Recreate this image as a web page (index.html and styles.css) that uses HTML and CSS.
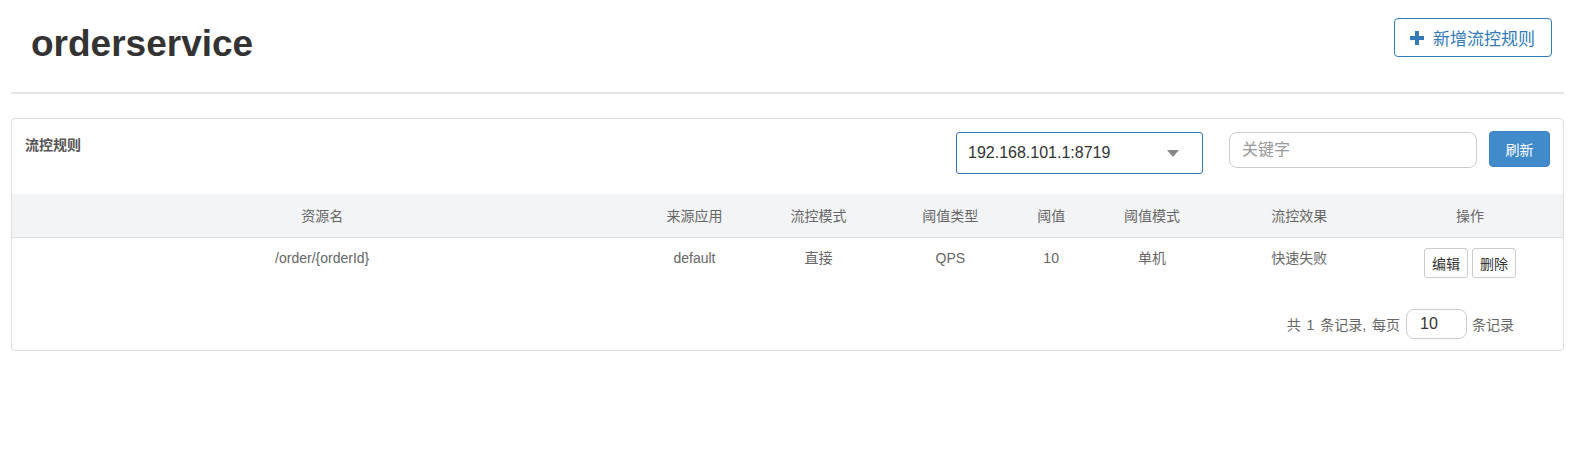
FILE: index.html
```html
<!DOCTYPE html>
<html lang="zh-CN">
<head>
<meta charset="utf-8">
<title>orderservice</title>
<link rel="stylesheet" href="styles.css">
</head>
<body>
<div class="page">
  <div class="page-header">
    <h1 class="app-title">orderservice</h1>
    <button class="btn-add">
      <svg class="plus" width="14" height="14" viewBox="0 0 14 14"><rect x="5" y="0" width="4" height="14" fill="#337ab7"/><rect x="0" y="5" width="14" height="4" fill="#337ab7"/></svg>
      <span>新增流控规则</span>
    </button>
  </div>

  <div class="panel">
    <div class="panel-head">
      <div class="panel-title">流控规则</div>
      <div class="controls">
        <div class="machine-select">
          <span>192.168.101.1:8719</span>
          <i class="caret"></i>
        </div>
        <input class="search" type="text" placeholder="关键字">
        <button class="btn-refresh">刷新</button>
      </div>
    </div>
    <table class="rules">
      <colgroup>
        <col class="c40"><col class="c8"><col class="c8"><col class="c9"><col class="c4"><col class="c9"><col class="c10"><col class="c12">
      </colgroup>
      <thead>
        <tr>
          <th>资源名</th><th>来源应用</th><th>流控模式</th><th>阈值类型</th><th>阈值</th><th>阈值模式</th><th>流控效果</th><th>操作</th>
        </tr>
      </thead>
      <tbody>
        <tr>
          <td>/order/{orderId}</td><td>default</td><td>直接</td><td>QPS</td><td>10</td><td>单机</td><td>快速失败</td>
          <td><button class="btn-op">编辑</button><button class="btn-op">删除</button></td>
        </tr>
      </tbody>
    </table>
    <div class="pager">
      <span class="pager-text">共 1 条记录, 每页</span>
      <input class="page-size" type="text" value="10">
      <span>条记录</span>
    </div>
  </div>
</div>
</body>
</html>
```

FILE: styles.css
```css
* { box-sizing: border-box; }
body {
  margin: 0;
  font-family: "Liberation Sans", "Noto Sans CJK SC", sans-serif;
  font-size: 14px;
  color: #333;
  background: #fff;
}
.page {
  padding: 0 13px 0 11px;
}
.page-header {
  display: flex;
  justify-content: space-between;
  align-items: flex-start;
  height: 94px;
  padding: 18px 12px 0 20px;
  border-bottom: 2px solid #e5e5e5;
}
.app-title {
  margin: 6px 0 0 0;
  font-size: 37px;
  line-height: 40px;
  font-weight: bold;
  color: #333;
}
.btn-add {
  display: flex;
  align-items: center;
  height: 39px;
  padding: 0 16px 0 15px;
  border: 1px solid #337ab7;
  border-radius: 4px;
  background: #fff;
  color: #337ab7;
  font-family: "Liberation Sans", "Noto Sans CJK SC", sans-serif;
  font-size: 17px;
  cursor: pointer;
}
.btn-add .plus { margin-right: 9px; }

.panel {
  margin-top: 24px;
  border: 1px solid #ddd;
  border-radius: 4px;
  padding-bottom: 11px;
}
.panel-head {
  display: flex;
  justify-content: space-between;
  align-items: flex-start;
  height: 75px;
  padding: 12px 13px 0 13px;
}
.panel-title {
  margin-top: 4px;
  font-size: 14px;
  line-height: 20px;
  font-weight: bold;
  color: #555;
}
.controls {
  display: flex;
  align-items: flex-start;
}
.machine-select {
  display: flex;
  align-items: center;
  justify-content: space-between;
  width: 247px;
  height: 42px;
  margin-top: 1px;
  margin-right: 26px;
  padding: 0 23px 0 11px;
  border: 1px solid #3a76b3;
  border-radius: 3px;
  font-size: 16px;
  color: #333;
}
.caret {
  width: 0;
  height: 0;
  border-left: 6px solid transparent;
  border-right: 6px solid transparent;
  border-top: 7px solid #888;
}
.search {
  width: 248px;
  height: 36px;
  margin-top: 1px;
  padding: 0 12px;
  border: 1px solid #ccc;
  border-radius: 8px;
  font-family: "Liberation Sans", "Noto Sans CJK SC", sans-serif;
  font-size: 16px;
  color: #333;
  outline: none;
}
.search::placeholder { color: #999; }
.btn-refresh {
  width: 61px;
  height: 36px;
  margin-left: 12px;
  border: 1px solid #3b84c4;
  border-radius: 4px;
  background: #428bca;
  color: #fff;
  font-family: "Liberation Sans", "Noto Sans CJK SC", sans-serif;
  font-size: 14px;
  cursor: pointer;
}

.rules {
  width: 100%;
  border-collapse: collapse;
  table-layout: fixed;
}
.c40 { width: 40%; }
.c12 { width: 12%; }
.c10 { width: 10%; }
.c9 { width: 9%; }
.c8 { width: 8%; }
.c4 { width: 4%; }
.rules th {
  height: 43px;
  background: #f3f4f6;
  border-bottom: 1px solid #ddd;
  font-weight: normal;
  color: #666;
  text-align: center;
  padding: 0 8px;
}
.rules td {
  padding: 10px 8px;
  line-height: 20px;
  color: #666;
  text-align: center;
  vertical-align: top;
}
.btn-op {
  height: 30px;
  padding: 0 7px;
  margin: 0 2px;
  border: 1px solid #ccc;
  border-radius: 3px;
  background: #fff;
  color: #333;
  font-family: "Liberation Sans", "Noto Sans CJK SC", sans-serif;
  font-size: 14px;
}
.pager {
  display: flex;
  justify-content: flex-end;
  align-items: center;
  margin-top: 21px;
  padding-right: 49px;
  color: #666;
  font-size: 14px;
}
.pager-text { word-spacing: 2px; }
.page-size {
  width: 61px;
  height: 30px;
  margin: 0 5px 0 6px;
  padding: 0 13px;
  border: 1px solid #ccc;
  border-radius: 8px;
  font-family: "Liberation Sans", "Noto Sans CJK SC", sans-serif;
  font-size: 16px;
  color: #333;
  outline: none;
}
```
